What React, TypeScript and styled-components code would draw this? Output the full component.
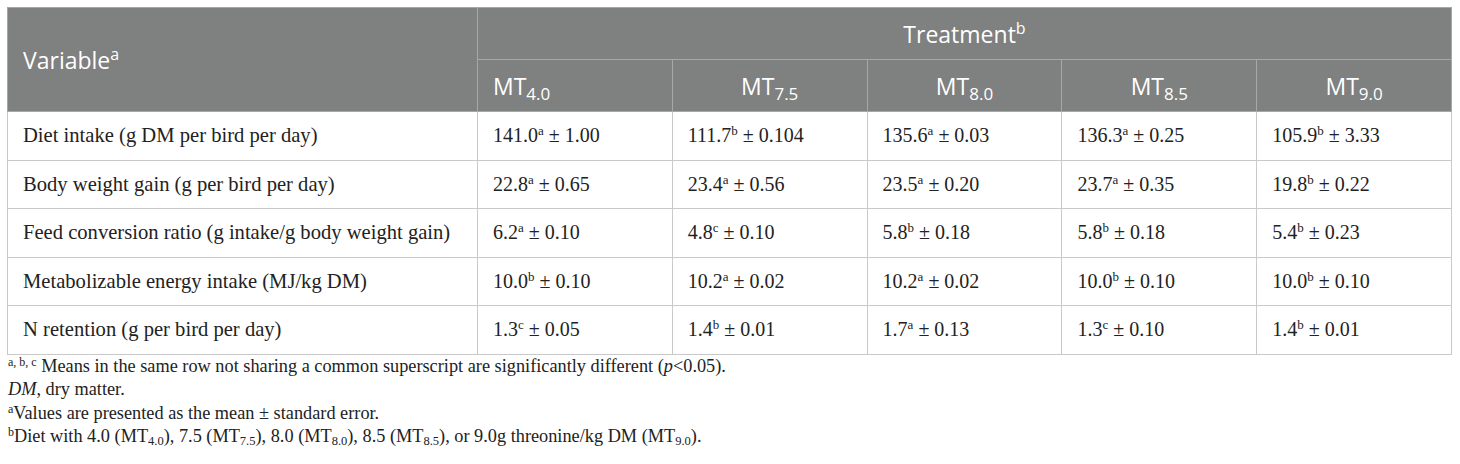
import { FC } from "react";
import styled, { createGlobalStyle } from "styled-components";

const GlobalStyle = createGlobalStyle`
  body {
    margin: 0;
    background: #ffffff;
  }
`;

interface Value {
  mean: string;
  sup: string;
  se: string;
}

interface Row {
  label: string;
  values: Value[];
}

const treatments = ["4.0", "7.5", "8.0", "8.5", "9.0"];

const rows: Row[] = [
  {
    label: "Diet intake (g DM per bird per day)",
    values: [
      { mean: "141.0", sup: "a", se: "1.00" },
      { mean: "111.7", sup: "b", se: "0.104" },
      { mean: "135.6", sup: "a", se: "0.03" },
      { mean: "136.3", sup: "a", se: "0.25" },
      { mean: "105.9", sup: "b", se: "3.33" },
    ],
  },
  {
    label: "Body weight gain (g per bird per day)",
    values: [
      { mean: "22.8", sup: "a", se: "0.65" },
      { mean: "23.4", sup: "a", se: "0.56" },
      { mean: "23.5", sup: "a", se: "0.20" },
      { mean: "23.7", sup: "a", se: "0.35" },
      { mean: "19.8", sup: "b", se: "0.22" },
    ],
  },
  {
    label: "Feed conversion ratio (g intake/g body weight gain)",
    values: [
      { mean: "6.2", sup: "a", se: "0.10" },
      { mean: "4.8", sup: "c", se: "0.10" },
      { mean: "5.8", sup: "b", se: "0.18" },
      { mean: "5.8", sup: "b", se: "0.18" },
      { mean: "5.4", sup: "b", se: "0.23" },
    ],
  },
  {
    label: "Metabolizable energy intake (MJ/kg DM)",
    values: [
      { mean: "10.0", sup: "b", se: "0.10" },
      { mean: "10.2", sup: "a", se: "0.02" },
      { mean: "10.2", sup: "a", se: "0.02" },
      { mean: "10.0", sup: "b", se: "0.10" },
      { mean: "10.0", sup: "b", se: "0.10" },
    ],
  },
  {
    label: "N retention (g per bird per day)",
    values: [
      { mean: "1.3", sup: "c", se: "0.05" },
      { mean: "1.4", sup: "b", se: "0.01" },
      { mean: "1.7", sup: "a", se: "0.13" },
      { mean: "1.3", sup: "c", se: "0.10" },
      { mean: "1.4", sup: "b", se: "0.01" },
    ],
  },
];

const Page = styled.div`
  padding: 7px 8px 0 7px;
`;

const Table = styled.table`
  width: 1445px;
  border-collapse: collapse;
  table-layout: fixed;
  border: 1px solid #c9c9c9;
`;

const HeadRow = styled.tr`
  height: 52px;
`;

const HeadCell = styled.th<{ $align?: "left" | "center" }>`
  background: #7f8080;
  color: #ffffff;
  font-family: "Open Sans", "Noto Sans", sans-serif;
  font-weight: 400;
  font-size: 23px;
  text-align: ${(p) => p.$align ?? "center"};
  padding: 0 15px;
  border: 1px solid #a6a7a7;
  vertical-align: middle;
`;

const HeadSup = styled.sup`
  font-size: 16px;
  vertical-align: 9px;
  line-height: 0;
`;

const HeadSub = styled.sub`
  font-size: 17px;
  vertical-align: -5px;
  line-height: 0;
`;

const BodyRow = styled.tr`
  height: 48.5px;
`;

const Cell = styled.td<{ $label?: boolean }>`
  font-family: "Liberation Serif", "Times New Roman", serif;
  font-size: ${(p) => (p.$label ? "20.6px" : "20px")};
  color: #222222;
  padding: 0 15px;
  border: 1px solid #c9c9c9;
  vertical-align: middle;
  white-space: nowrap;
`;

const ValueSup = styled.sup`
  font-size: 13px;
  vertical-align: 7px;
  line-height: 0;
`;

const Notes = styled.div`
  font-family: "Liberation Serif", "Times New Roman", serif;
  font-size: 18.3px;
  line-height: 23.5px;
  color: #222222;
  padding-left: 1px;
`;

const NoteSup = styled.sup`
  font-size: 12px;
  vertical-align: 6px;
  line-height: 0;
`;

const NoteSub = styled.sub`
  font-size: 12.5px;
  vertical-align: -3px;
  line-height: 0;
`;

const MT: FC<{ dose: string }> = ({ dose }) => (
  <>
    MT<NoteSub>{dose}</NoteSub>
  </>
);

export default function App() {
  return (
    <Page>
      <GlobalStyle />
      <Table>
        <colgroup>
          <col style={{ width: 470 }} />
          {treatments.map((t) => (
            <col key={t} />
          ))}
        </colgroup>
        <thead>
          <HeadRow>
            <HeadCell rowSpan={2} $align="left">
              Variable<HeadSup>a</HeadSup>
            </HeadCell>
            <HeadCell colSpan={5}>
              Treatment<HeadSup>b</HeadSup>
            </HeadCell>
          </HeadRow>
          <HeadRow>
            {treatments.map((t, i) => (
              <HeadCell key={t} $align={i === 0 ? "left" : "center"}>
                MT<HeadSub>{t}</HeadSub>
              </HeadCell>
            ))}
          </HeadRow>
        </thead>
        <tbody>
          {rows.map((r) => (
            <BodyRow key={r.label}>
              <Cell $label>{r.label}</Cell>
              {r.values.map((v, i) => (
                <Cell key={i}>
                  {v.mean}
                  <ValueSup>{v.sup}</ValueSup> ± {v.se}
                </Cell>
              ))}
            </BodyRow>
          ))}
        </tbody>
      </Table>
      <Notes>
        <div>
          <NoteSup>a, b, c</NoteSup> Means in the same row not sharing a common
          superscript are significantly different (<i>p</i>&lt;0.05).
        </div>
        <div>
          <i>DM</i>, dry matter.
        </div>
        <div>
          <NoteSup>a</NoteSup>Values are presented as the mean ± standard error.
        </div>
        <div>
          <NoteSup>b</NoteSup>Diet with 4.0 (<MT dose="4.0" />), 7.5 (
          <MT dose="7.5" />
          ), 8.0 (<MT dose="8.0" />
          ), 8.5 (<MT dose="8.5" />
          ), or 9.0g threonine/kg DM (<MT dose="9.0" />
          ).
        </div>
      </Notes>
    </Page>
  );
}
